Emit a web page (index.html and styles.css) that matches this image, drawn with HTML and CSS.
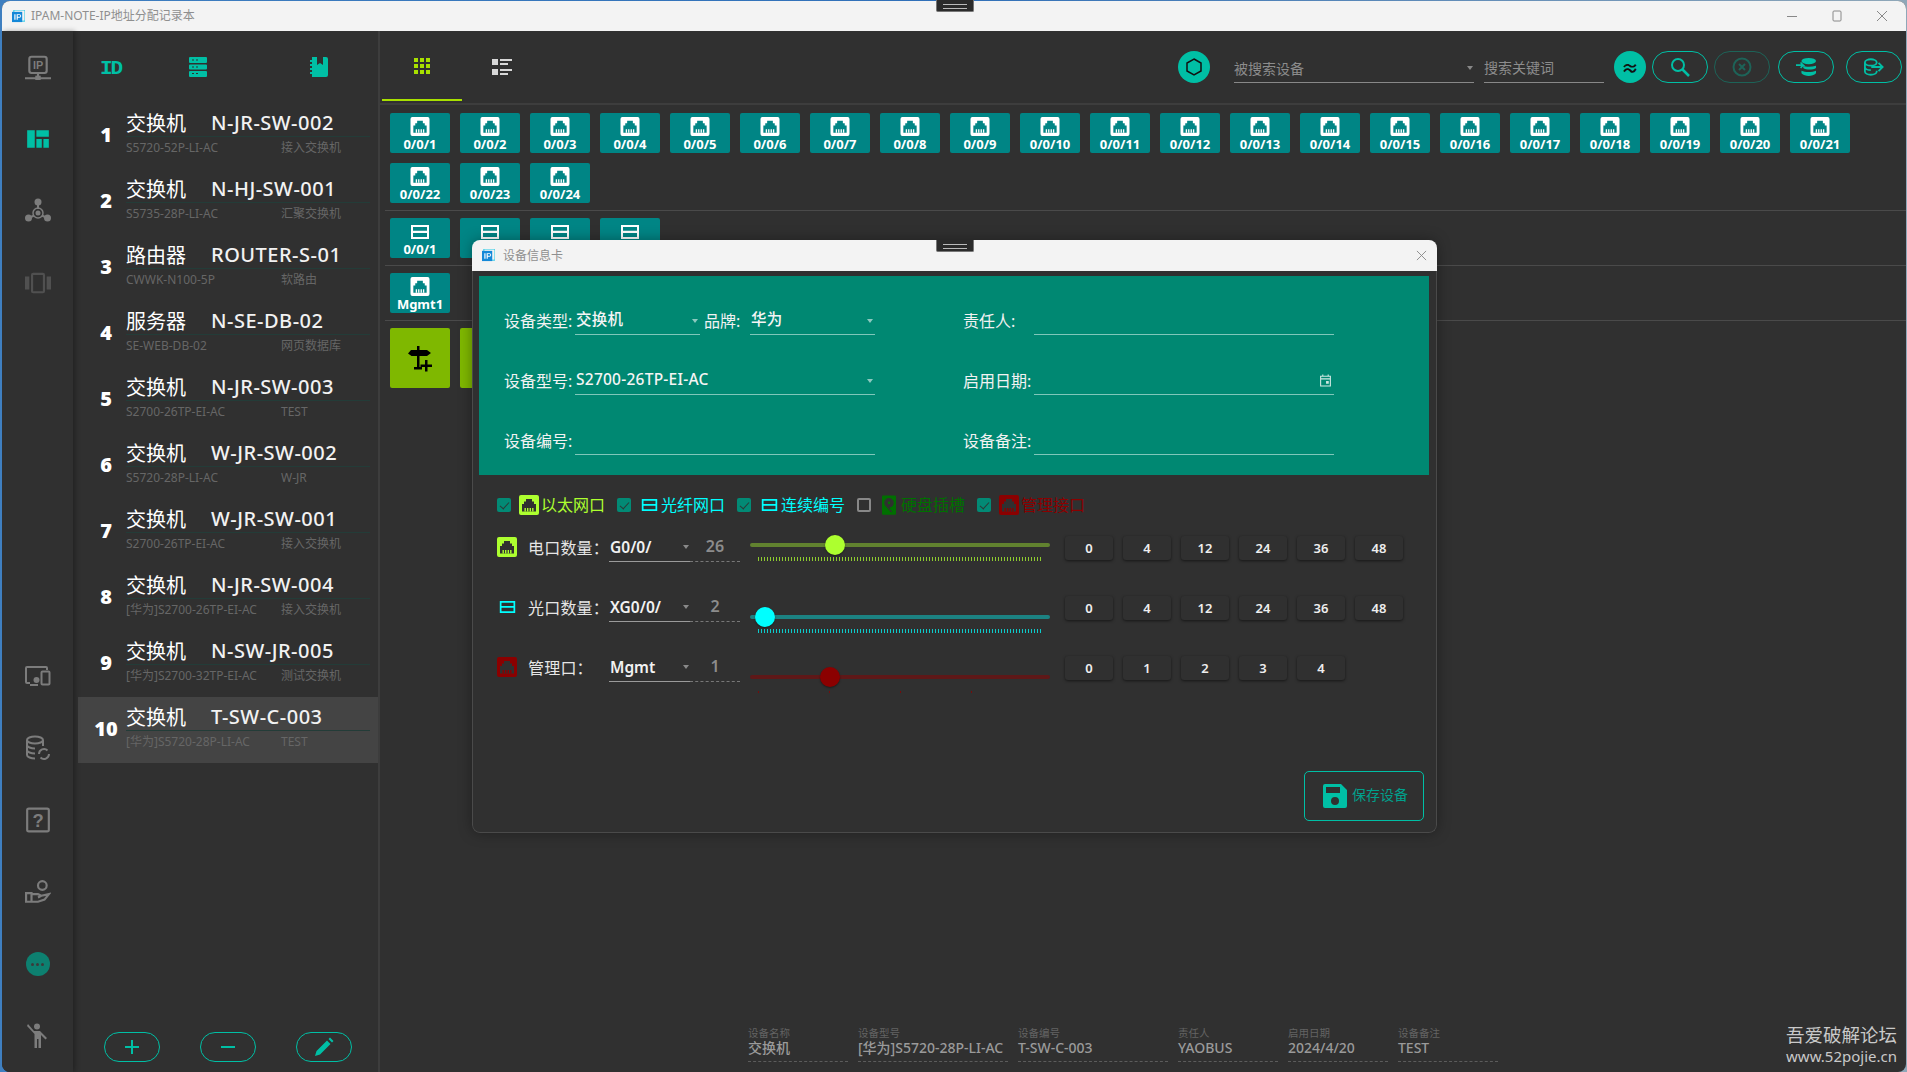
FILE: index.html
```html
<!DOCTYPE html>
<html lang="zh">
<head>
<meta charset="utf-8">
<title>IPAM-NOTE</title>
<link rel="stylesheet" href="styles.css">
</head>
<body>
<svg class="defs" width="0" height="0" aria-hidden="true">
  <symbol id="port" viewBox="0 0 20 20"><path fill-rule="evenodd" d="M2 0h16a2 2 0 0 1 2 2v16a2 2 0 0 1-2 2H2a2 2 0 0 1-2-2V2a2 2 0 0 1 2-2zM7 4v2.500H5V9H3v7.500h14V9h-2V6.500h-2V4z" fill="currentColor"/><path d="M5.500 13h1.400v3.500H5.500zM8 13h1.400v3.500H8zM10.600 13H12v3.500h-1.400zM13.100 13h1.400v3.500h-1.400z" fill="currentColor"/></symbol>
  <symbol id="fiber" viewBox="0 0 18 14"><path fill-rule="evenodd" d="M0 0h18v14H0zM2 2v3.800h14V2zM2 8v4h14V8z" fill="currentColor"/></symbol>
  <symbol id="sign" viewBox="0 0 28 28"><path d="M11 2h2.500v4H21l4 3-4 3h-7.500v11H16v2.500H8V23h3V12H5.500L2 9.500 5 6h6z" fill="#000"/><path d="M19 16h2.500v4.500H26V23h-4.500v4.500H19V23h-4.500v-2.500H19z" fill="#000"/></symbol>
</svg>

<div class="window">
  <header class="titlebar">
    <svg class="app-logo" viewBox="0 0 14 14"><rect x="2" y="0" width="12" height="12" fill="none" stroke="#19c6e6" stroke-width="1"/><rect x="0" y="2" width="11" height="11" fill="#1488d8"/><path d="M2.500 4.500h1.300v6H2.500zM5 4.500h3a1.800 1.800 0 0 1 0 3.800H6.200v2.200H5zm1.200 1v1.800H8a.9.9 0 0 0 0-1.800z" fill="#fff"/></svg>
    <span class="title-text">IPAM-NOTE-IP地址分配记录本</span>
    <div class="win-controls">
      <svg viewBox="0 0 12 12"><path d="M1 6.500h10" stroke="#888" fill="none"/></svg>
      <svg viewBox="0 0 12 12"><rect x="2" y="1" width="8" height="10" rx="1" stroke="#888" fill="none"/></svg>
      <svg viewBox="0 0 12 12"><path d="M1 1l10 10M11 1L1 11" stroke="#888" fill="none"/></svg>
    </div>
  </header>

  <div class="app">
    <nav class="rail">
      <div class="rail-slot"><svg class="rail-icon" viewBox="0 -1.500 24 24"><rect x="4" y="1" width="16" height="15" rx="2" fill="none" stroke="currentColor" stroke-width="2"/><text x="12" y="12.500" class="svg-ip">IP</text><path d="M11 16h2v3h-2zM0 20h24v1.800H0z" fill="currentColor"/><rect x="9.500" y="18.500" width="5" height="4" fill="currentColor"/></svg></div>
      <div class="rail-slot rail-active"><svg class="rail-icon" viewBox="0 0 24 24"><path d="M2 4h7v16H2zM10.500 4H22v6H10.500zM10.500 12H15.500v8H10.500zM17 12h5v8h-5z" fill="currentColor"/></svg></div>
      <div class="rail-slot"><svg class="rail-icon" viewBox="0 0 26 26"><circle cx="13" cy="4" r="3.500" fill="currentColor"/><circle cx="3.500" cy="20" r="3.500" fill="currentColor"/><circle cx="22.500" cy="20" r="3.500" fill="currentColor"/><circle cx="13" cy="15" r="2.500" fill="currentColor"/><path d="M13 7v4M6 19l3-1.500M20 19l-3-1.500" stroke="currentColor" stroke-width="2"/><circle cx="13" cy="15" r="5" fill="none" stroke="currentColor" stroke-width="1.500"/></svg></div>
      <div class="rail-slot rail-dim"><svg class="rail-icon" viewBox="0 0 24 24"><path d="M0 6h4v12H0zM20 6h4v12h-4z" fill="currentColor"/><rect x="6.500" y="3.500" width="11" height="17" rx="1" fill="none" stroke="currentColor" stroke-width="2"/></svg></div>
      <div class="rail-spacer"></div>
      <div class="rail-slot"><svg class="rail-icon" viewBox="0 0 26 22"><path d="M5 18H2a1 1 0 0 1-1-1V3a1 1 0 0 1 1-1h19a1 1 0 0 1 1 1v2" fill="none" stroke="currentColor" stroke-width="2"/><rect x="16.500" y="6.500" width="8" height="13" rx="1" fill="none" stroke="currentColor" stroke-width="2"/><circle cx="11.500" cy="15" r="3" fill="currentColor"/><path d="M5 20h8" stroke="currentColor" stroke-width="2"/></svg></div>
      <div class="rail-slot"><svg class="rail-icon" viewBox="0 0 26 26"><ellipse cx="10" cy="5" rx="8" ry="3.500" fill="none" stroke="currentColor" stroke-width="2"/><path d="M2 5v15c0 2 4 3.500 8 3.500M18 5v6M2 10c0 2 4 3.500 8 3.500M2 15c0 2 4 3.500 8 3.500" fill="none" stroke="currentColor" stroke-width="2"/><path d="M14 19a5 5 0 0 1 8.500-3.500M24 19a5 5 0 0 1-8.500 3.500" fill="none" stroke="currentColor" stroke-width="2"/></svg></div>
      <div class="rail-slot"><svg class="rail-icon" viewBox="0 0 24 24"><rect x="2" y="1.500" width="20" height="21" rx="1.500" fill="none" stroke="currentColor" stroke-width="2"/><text x="12" y="18" class="svg-q">?</text></svg></div>
      <div class="rail-slot"><svg class="rail-icon" viewBox="0 0 24 24"><circle cx="16" cy="6" r="4" fill="none" stroke="currentColor" stroke-width="2"/><path d="M1 13h5v8H1zM6 14h6l3 1.500-3 1.500M15 15.500l7-1.500-4 5-6 2H6" fill="none" stroke="currentColor" stroke-width="2"/></svg></div>
      <div class="rail-slot rail-more"><span class="more-dot"><i></i><i></i><i></i></span></div>
      <div class="rail-slot"><svg class="rail-icon" viewBox="0 0 24 26"><circle cx="11" cy="3.500" r="3" fill="currentColor"/><path d="M2 1l6 7h6l7 7-1.500 1.500L15 12v13h-2.500v-9h-1.500v9H8.500V11L1 3z" fill="currentColor"/></svg></div>
    </nav>

    <aside class="panel">
      <div class="panel-head">
        <span class="head-id">ID</span>
        <svg class="head-icon" viewBox="0 0 18 20"><path d="M1 0h16a1 1 0 0 1 1 1v4a1 1 0 0 1-1 1H1a1 1 0 0 1-1-1V1a1 1 0 0 1 1-1zM1 7.500h16a1 1 0 0 1 1 1v3a1 1 0 0 1-1 1H1a1 1 0 0 1-1-1v-3a1 1 0 0 1 1-1zM1 14h16a1 1 0 0 1 1 1v4a1 1 0 0 1-1 1H1a1 1 0 0 1-1-1v-4a1 1 0 0 1 1-1z" fill="currentColor"/><path d="M3 2.500h2v1H3zM7 2.500h2v1H7zM3 9.500h2v1H3zM7 9.500h2v1H7zM3 16h2v1H3zM7 16h2v1H7z" fill="#303030"/></svg>
        <svg class="head-icon head-book" viewBox="0 0 18 20"><path d="M2 0h5v8l3-2 3 2V0h3a2 2 0 0 1 2 2v16a2 2 0 0 1-2 2H2z" fill="currentColor"/><path d="M0 3h2v2H0zM0 7h2v2H0zM0 11h2v2H0zM0 15h2v2H0z" fill="currentColor"/></svg>
      </div>
      <ul class="dev-list">
        <li class="dev"><b class="dev-no">1</b><div class="dev-body"><div class="dev-main"><span class="dev-type">交换机</span><span class="dev-host">N-JR-SW-002</span></div><div class="dev-sub"><span class="dev-model">S5720-52P-LI-AC</span><span>接入交换机</span></div></div></li>
        <li class="dev"><b class="dev-no">2</b><div class="dev-body"><div class="dev-main"><span class="dev-type">交换机</span><span class="dev-host">N-HJ-SW-001</span></div><div class="dev-sub"><span class="dev-model">S5735-28P-LI-AC</span><span>汇聚交换机</span></div></div></li>
        <li class="dev"><b class="dev-no">3</b><div class="dev-body"><div class="dev-main"><span class="dev-type">路由器</span><span class="dev-host">ROUTER-S-01</span></div><div class="dev-sub"><span class="dev-model">CWWK-N100-5P</span><span>软路由</span></div></div></li>
        <li class="dev"><b class="dev-no">4</b><div class="dev-body"><div class="dev-main"><span class="dev-type">服务器</span><span class="dev-host">N-SE-DB-02</span></div><div class="dev-sub"><span class="dev-model">SE-WEB-DB-02</span><span>网页数据库</span></div></div></li>
        <li class="dev"><b class="dev-no">5</b><div class="dev-body"><div class="dev-main"><span class="dev-type">交换机</span><span class="dev-host">N-JR-SW-003</span></div><div class="dev-sub"><span class="dev-model">S2700-26TP-EI-AC</span><span>TEST</span></div></div></li>
        <li class="dev"><b class="dev-no">6</b><div class="dev-body"><div class="dev-main"><span class="dev-type">交换机</span><span class="dev-host">W-JR-SW-002</span></div><div class="dev-sub"><span class="dev-model">S5720-28P-LI-AC</span><span>W-JR</span></div></div></li>
        <li class="dev"><b class="dev-no">7</b><div class="dev-body"><div class="dev-main"><span class="dev-type">交换机</span><span class="dev-host">W-JR-SW-001</span></div><div class="dev-sub"><span class="dev-model">S2700-26TP-EI-AC</span><span>接入交换机</span></div></div></li>
        <li class="dev"><b class="dev-no">8</b><div class="dev-body"><div class="dev-main"><span class="dev-type">交换机</span><span class="dev-host">N-JR-SW-004</span></div><div class="dev-sub"><span class="dev-model">[华为]S2700-26TP-EI-AC</span><span>接入交换机</span></div></div></li>
        <li class="dev"><b class="dev-no">9</b><div class="dev-body"><div class="dev-main"><span class="dev-type">交换机</span><span class="dev-host">N-SW-JR-005</span></div><div class="dev-sub"><span class="dev-model">[华为]S2700-32TP-EI-AC</span><span>测试交换机</span></div></div></li>
        <li class="dev dev-selected"><b class="dev-no">10</b><div class="dev-body"><div class="dev-main"><span class="dev-type">交换机</span><span class="dev-host">T-SW-C-003</span></div><div class="dev-sub"><span class="dev-model">[华为]S5720-28P-LI-AC</span><span>TEST</span></div></div></li>
      </ul>
      <div class="panel-actions">
        <button class="pill"><svg viewBox="0 0 16 16"><path d="M7 1h2v6h6v2H9v6H7V9H1V7h6z" fill="currentColor"/></svg></button>
        <button class="pill"><svg viewBox="0 0 16 16"><path d="M1 7h14v2H1z" fill="currentColor"/></svg></button>
        <button class="pill"><svg viewBox="0 0 20 20"><path d="M1 19l1.500-5L13 3.500l3.500 3.500L6 17.500zM14.500 2l1.500-1.500 3.500 3.500L18 5.500z" fill="currentColor"/></svg></button>
      </div>
    </aside>

    <main class="main">
      <div class="main-head">
        <div class="tab tab-active"><svg viewBox="0 0 16 16"><path d="M0 0h4v4H0zM6 0h4v4H6zM12 0h4v4h-4zM0 6h4v4H0zM6 6h4v4H6zM12 6h4v4h-4zM0 12h4v4H0zM6 12h4v4H6zM12 12h4v4h-4z" fill="currentColor"/></svg></div>
        <div class="tab"><svg class="tab-list" viewBox="0 0 20 16"><path d="M0 0h6v6H0zM0 10h6v6H0zM8 0h12v2H8zM8 4h8v2H8zM8 10h12v2H8zM8 14h8v2H8z" fill="currentColor"/></svg></div>
        <div class="tools">
          <button class="round-btn"><svg viewBox="0 0 16 18"><path d="M8 1l7 4v8l-7 4-7-4V5z" fill="none" stroke="#111" stroke-width="1.500"/></svg></button>
          <div class="tool-select"><span>被搜索设备</span><i class="caret caret-grey"></i></div>
          <div class="tool-input">搜索关键词</div>
          <button class="round-btn round-approx">≈</button>
          <button class="pill pill-tool"><svg viewBox="0 0 20 20"><circle cx="8" cy="8" r="6" fill="none" stroke="currentColor" stroke-width="2"/><path d="M12.500 12.500L19 19" stroke="currentColor" stroke-width="2.500"/></svg></button>
          <button class="pill pill-tool pill-off"><svg viewBox="0 0 20 20"><circle cx="10" cy="10" r="8.500" fill="none" stroke="currentColor" stroke-width="2"/><path d="M7 7l6 6M13 7l-6 6" stroke="currentColor" stroke-width="2"/></svg></button>
          <button class="pill pill-tool"><svg viewBox="0 0 22 20"><ellipse cx="14" cy="3.500" rx="8" ry="3.500" fill="currentColor"/><path d="M8 8.500c3 1.500 9 1.500 14 0v2.500c-3 2.500-11 2.500-14 0zM6 14c4 2 12 2 16 0v3c-4 4-12 4-16 0z" fill="currentColor"/><path d="M0 8h8l-3-3M8 8l-3 3" stroke="currentColor" stroke-width="1.800" fill="none"/></svg></button>
          <button class="pill pill-tool"><svg viewBox="0 0 22 20"><path d="M14 5c0 2-3 3.500-6.500 3.500S1 7 1 5s3-3.500 6.500-3.500S14 3 14 5zM1 5v10c0 2 3 3.500 6.500 3.500S14 17 14 15v-1M1 10c0 2 3 3.500 6.500 3.500" fill="none" stroke="currentColor" stroke-width="2"/><path d="M8 10h12M16 5.500l4.500 4.500-4.500 4.500" fill="none" stroke="currentColor" stroke-width="2"/></svg></button>
        </div>
      </div>

      <section class="tile-group tile-first">
        <div class="tile"><svg><use href="#port"/></svg><span>0/0/1</span></div>
        <div class="tile"><svg><use href="#port"/></svg><span>0/0/2</span></div>
        <div class="tile"><svg><use href="#port"/></svg><span>0/0/3</span></div>
        <div class="tile"><svg><use href="#port"/></svg><span>0/0/4</span></div>
        <div class="tile"><svg><use href="#port"/></svg><span>0/0/5</span></div>
        <div class="tile"><svg><use href="#port"/></svg><span>0/0/6</span></div>
        <div class="tile"><svg><use href="#port"/></svg><span>0/0/7</span></div>
        <div class="tile"><svg><use href="#port"/></svg><span>0/0/8</span></div>
        <div class="tile"><svg><use href="#port"/></svg><span>0/0/9</span></div>
        <div class="tile"><svg><use href="#port"/></svg><span>0/0/10</span></div>
        <div class="tile"><svg><use href="#port"/></svg><span>0/0/11</span></div>
        <div class="tile"><svg><use href="#port"/></svg><span>0/0/12</span></div>
        <div class="tile"><svg><use href="#port"/></svg><span>0/0/13</span></div>
        <div class="tile"><svg><use href="#port"/></svg><span>0/0/14</span></div>
        <div class="tile"><svg><use href="#port"/></svg><span>0/0/15</span></div>
        <div class="tile"><svg><use href="#port"/></svg><span>0/0/16</span></div>
        <div class="tile"><svg><use href="#port"/></svg><span>0/0/17</span></div>
        <div class="tile"><svg><use href="#port"/></svg><span>0/0/18</span></div>
        <div class="tile"><svg><use href="#port"/></svg><span>0/0/19</span></div>
        <div class="tile"><svg><use href="#port"/></svg><span>0/0/20</span></div>
        <div class="tile"><svg><use href="#port"/></svg><span>0/0/21</span></div>
        <div class="tile"><svg><use href="#port"/></svg><span>0/0/22</span></div>
        <div class="tile"><svg><use href="#port"/></svg><span>0/0/23</span></div>
        <div class="tile"><svg><use href="#port"/></svg><span>0/0/24</span></div>
      </section>
      <section class="tile-group">
        <div class="tile tile-fiber"><svg><use href="#fiber"/></svg><span>0/0/1</span></div>
        <div class="tile tile-fiber"><svg><use href="#fiber"/></svg></div>
        <div class="tile tile-fiber"><svg><use href="#fiber"/></svg></div>
        <div class="tile tile-fiber"><svg><use href="#fiber"/></svg></div>
      </section>
      <section class="tile-group">
        <div class="tile"><svg><use href="#port"/></svg><span>Mgmt1</span></div>
      </section>
      <section class="tile-group tile-last">
        <div class="tile-add"><svg><use href="#sign"/></svg></div>
        <div class="tile-add"><svg><use href="#sign"/></svg></div>
      </section>

      <footer class="summary">
        <div class="sum sum-s"><small>设备名称</small><span>交换机</span></div>
        <div class="sum sum-l"><small>设备型号</small><span>[华为]S5720-28P-LI-AC</span></div>
        <div class="sum sum-l"><small>设备编号</small><span>T-SW-C-003</span></div>
        <div class="sum sum-s"><small>责任人</small><span>YAOBUS</span></div>
        <div class="sum sum-s"><small>启用日期</small><span>2024/4/20</span></div>
        <div class="sum sum-s"><small>设备备注</small><span>TEST</span></div>
      </footer>
    </main>
  </div>
</div>

<div class="snap snap-top"></div>

<div class="dialog">
  <div class="dlg-title">
    <svg class="app-logo" viewBox="0 0 14 14"><rect x="2" y="0" width="12" height="12" fill="none" stroke="#19c6e6" stroke-width="1"/><rect x="0" y="2" width="11" height="11" fill="#1488d8"/><path d="M2.500 4.500h1.300v6H2.500zM5 4.500h3a1.800 1.800 0 0 1 0 3.800H6.200v2.200H5zm1.200 1v1.800H8a.9.9 0 0 0 0-1.800z" fill="#fff"/></svg>
    <span class="dlg-text">设备信息卡</span>
    <svg class="dlg-close" viewBox="0 0 12 12"><path d="M1 1l10 10M11 1L1 11" stroke="#888" fill="none"/></svg>
  </div>
  <div class="dlg-body">
    <div class="form">
      <div class="form-row">
        <label class="f-label">设备类型:</label>
        <div class="f-field f-short"><span>交换机</span><i class="caret"></i></div>
        <label class="f-label f-brand">品牌:</label>
        <div class="f-field f-short"><span>华为</span><i class="caret"></i></div>
        <label class="f-label f-right f-gap-a">责任人:</label>
        <div class="f-field f-long"></div>
      </div>
      <div class="form-row">
        <label class="f-label">设备型号:</label>
        <div class="f-field f-long"><span>S2700-26TP-EI-AC</span><i class="caret"></i></div>
        <label class="f-label f-right">启用日期:</label>
        <div class="f-field f-long"><svg class="cal" viewBox="0 0 12 12"><path d="M1.500 2h9v9h-9zM1.500 4.500h9M3.500.5v2M8.500.5v2" fill="none" stroke="#cfe9e3"/><path d="M6.500 6.500h2.500v2.500H6.500z" fill="#cfe9e3"/></svg></div>
      </div>
      <div class="form-row">
        <label class="f-label">设备编号:</label>
        <div class="f-field f-long"></div>
        <label class="f-label f-right">设备备注:</label>
        <div class="f-field f-long"></div>
      </div>
    </div>

    <div class="checks">
      <div class="check c-lime"><i class="box on"></i><span class="check-icon"><svg class="ci-port"><use href="#port"/></svg></span><span>以太网口</span></div>
      <div class="check c-cyan"><i class="box on"></i><span class="check-icon"><svg class="ci-fiber"><use href="#fiber"/></svg></span><span>光纤网口</span></div>
      <div class="check c-cyan"><i class="box on"></i><span class="check-icon"><svg class="ci-fiber"><use href="#fiber"/></svg></span><span>连续编号</span></div>
      <div class="check c-green"><i class="box"></i><span class="check-icon"><svg class="ci-disk" viewBox="0 0 16 22"><path fill-rule="evenodd" d="M1 0h14a1 1 0 0 1 1 1v20a1 1 0 0 1-1 1H1a1 1 0 0 1-1-1V1a1 1 0 0 1 1-1zm7 3a5.500 5.500 0 1 0 0 11 5.500 5.500 0 0 0 0-11z" fill="currentColor"/><circle cx="8" cy="8.500" r="1.500" fill="currentColor"/><path d="M6 13l5 6" stroke="#303030" stroke-width="1.500"/></svg></span><span>硬盘插槽</span></div>
      <div class="check c-red"><i class="box on"></i><span class="check-icon"><svg class="ci-port"><use href="#port"/></svg></span><span>管理接口</span></div>
    </div>

    <div class="port-row c-lime">
      <span class="row-icon"><svg class="ci-port"><use href="#port"/></svg></span>
      <span class="row-label">电口数量：</span>
      <div class="row-select"><span>G0/0/</span><i class="caret caret-grey"></i></div>
      <div class="row-value">26</div>
      <div class="slider slider-high">
        <div class="track"></div>
        <div class="ticks"></div>
        <i class="thumb" style="left:75px"></i>
      </div>
      <div class="presets"><button>0</button><button>4</button><button>12</button><button>24</button><button>36</button><button>48</button></div>
    </div>
    <div class="port-row c-cyan">
      <span class="row-icon"><svg class="ci-fiber"><use href="#fiber"/></svg></span>
      <span class="row-label">光口数量：</span>
      <div class="row-select"><span>XG0/0/</span><i class="caret caret-grey"></i></div>
      <div class="row-value">2</div>
      <div class="slider">
        <div class="track"></div>
        <div class="ticks"></div>
        <i class="thumb" style="left:5px"></i>
      </div>
      <div class="presets"><button>0</button><button>4</button><button>12</button><button>24</button><button>36</button><button>48</button></div>
    </div>
    <div class="port-row c-red">
      <span class="row-icon"><svg class="ci-port"><use href="#port"/></svg></span>
      <span class="row-label">管理口：</span>
      <div class="row-select"><span>Mgmt</span><i class="caret caret-grey"></i></div>
      <div class="row-value">1</div>
      <div class="slider">
        <div class="track track-red"></div>
        <div class="ticks ticks-sparse"></div>
        <i class="thumb" style="left:70px"></i>
      </div>
      <div class="presets"><button>0</button><button>1</button><button>2</button><button>3</button><button>4</button></div>
    </div>

    <button class="save"><svg viewBox="0 0 24 24"><path fill-rule="evenodd" d="M2 0h16l6 6v16a2 2 0 0 1-2 2H2a2 2 0 0 1-2-2V2a2 2 0 0 1 2-2zm1 3v6h14V3zm9 10a4 4 0 1 0 0 8 4 4 0 0 0 0-8z" fill="currentColor"/></svg><span>保存设备</span></button>
  </div>
</div>

<div class="snap snap-dlg"></div>

<div class="watermark">
  <div class="wm-cn">吾爱破解论坛</div>
  <div class="wm-en">www.52pojie.cn</div>
</div>
</body>
</html>
```

FILE: styles.css
```css
* { box-sizing: border-box; }
html, body { margin: 0; padding: 0; height: 1072px; overflow: hidden; }
body {
  background: linear-gradient(90deg, #3f7fc0, #2f6fb8 50%, #8fa7b8);
  font-family: "Noto Sans", "Noto Sans CJK SC", sans-serif;
  color: #eee;
  padding: 1px 1px 0 2px;
}
.defs { position: absolute; }
button { font-family: inherit; cursor: pointer; }
ul { list-style: none; margin: 0; padding: 0; }

.window { height: 1071px; display: flex; flex-direction: column; border-radius: 8px; overflow: hidden; background: #303030; }

/* title bar */
.titlebar { flex: 0 0 30px; background: #f3f3f3; display: flex; align-items: center; padding-left: 10px; }
.app-logo { width: 13px; height: 13px; flex: none; }
.title-text { margin-left: 6px; font-size: 12px; color: #8f8f8f; white-space: nowrap; padding-bottom: 2px; }
.win-controls { margin-left: auto; display: flex; gap: 33px; margin-right: 18px; }
.win-controls svg { width: 12px; height: 12px; }

.app { flex: 1; display: flex; min-height: 0; }

/* rail */
.rail { flex: 0 0 71px; display: flex; flex-direction: column; background: #303030; box-shadow: 2px 0 5px rgba(0,0,0,.3); position: relative; z-index: 1; color: #7c7c7c; }
.rail-slot { flex: 0 0 72px; display: flex; align-items: center; justify-content: center; }
.rail-spacer { flex: 1; }
.rail-icon { width: 26px; height: 26px; }
.rail-active { color: #00bfa5; }
.rail-dim { color: #505050; }
.svg-ip { font: 700 10px "Liberation Sans", sans-serif; fill: currentColor; text-anchor: middle; }
.svg-q { font: 700 17px "Liberation Sans", sans-serif; fill: currentColor; text-anchor: middle; }
.more-dot { width: 24px; height: 24px; border-radius: 50%; background: #0d8070; display: flex; align-items: center; justify-content: center; gap: 2px; }
.more-dot i { width: 3px; height: 3px; border-radius: 50%; background: #3b3b3b; }

/* panel */
.panel { flex: 0 0 307px; border-right: 2px solid #3d3d3d; display: flex; flex-direction: column; }
.panel-head { flex: 0 0 72px; display: flex; align-items: center; color: #00bfa5; padding-left: 30px; }
.head-id { width: 86px; margin: 3px 3px 0 -3px; font: 700 21px/1 "Liberation Mono", monospace; letter-spacing: -2px; }
.head-icon { width: 18px; height: 20px; }
.head-book { margin-left: 103px; }
.dev-list { flex: 1; margin-left: 5px; }
.dev { height: 66px; display: flex; }
.dev-selected { background: #444; }
.dev-no { flex: 0 0 48px; padding-left: 8px; font: 800 20px/64px "Open Sans", sans-serif; text-align: center; color: #fff; }
.dev-body { flex: 0 0 244px; }
.dev-main { height: 34px; padding-top: 7px; line-height: 27px; border-bottom: 1px solid #233c38; display: flex; white-space: nowrap; }
.dev-type { width: 85px; font-size: 20px; color: #fff; }
.dev-host { font-size: 20px; font-weight: 500; letter-spacing: .5px; color: #f2f2f2; margin-top: -1px; }
.dev-sub { display: flex; height: 22px; line-height: 22px; font-size: 12px; color: #666; white-space: nowrap; }
.dev-model { width: 155px; }
.panel-actions { flex: none; display: flex; gap: 40px; padding: 0 0 10px 31px; }

/* pills */
.pill { width: 56px; height: 30px; border: 1px solid #00bfa5; border-radius: 15px; background: transparent; color: #00bfa5; padding: 0; display: flex; align-items: center; justify-content: center; }
.pill svg { width: 16px; height: 16px; }
.panel-actions .pill:last-child svg { width: 20px; height: 20px; }

/* main */
.main { flex: 1; min-width: 0; display: flex; flex-direction: column; }
.main-head { flex: 0 0 74px; border-bottom: 2px solid #3d3d3d; display: flex; padding-left: 2px; }
.tab { flex: 0 0 80px; height: 70px; display: flex; align-items: center; justify-content: center; color: #d8d8d8; padding-top: 2px; }
.tab svg { width: 16px; height: 16px; }
.tab .tab-list { width: 20px; }
.tab-active { color: #a8e000; border-bottom: 2px solid #a8e000; }
.tools { margin-left: auto; height: 72px; display: flex; align-items: flex-start; padding: 20px 4px 0 0; }
.round-btn { width: 32px; height: 32px; border-radius: 50%; border: 0; background: #00bfa5; color: #111; padding: 0; display: flex; align-items: center; justify-content: center; font-size: 18px; font-weight: 700; }
.round-btn svg { width: 16px; height: 18px; }
.tool-select { width: 240px; height: 32px; margin-left: 24px; border-bottom: 1px solid #888; display: flex; align-items: center; justify-content: space-between; color: #8c8c8c; font-size: 14px; padding: 2px 1px 0 0; }
.tool-input { width: 120px; height: 32px; margin-left: 10px; border-bottom: 1px solid #888; line-height: 33px; color: #8c8c8c; font-size: 14px; }
.round-approx { margin-left: 10px; }
.pill-tool { height: 32px; border-radius: 16px; margin-left: 6px; }
.pill-tool svg { width: 20px; height: 20px; }
.pill-off { color: #1d6358; border-color: #1d6358; }
.pill-off + .pill-tool { margin-left: 8px; }
.pill-off + .pill-tool + .pill-tool { margin-left: 12px; }
.caret { display: inline-block; width: 0; height: 0; border: 3.500px solid transparent; border-top: 4px solid rgba(255,255,255,.55); border-bottom: 0; }
.caret-grey { border-top-color: #888; }

/* tiles */
.tile-group { margin-left: 5px; padding: 7px 0 7px 5px; border-bottom: 1px solid #4a4a4a; display: flex; flex-wrap: wrap; gap: 10px; }
.tile-first { padding-top: 8px; }
.tile-last { border-bottom: 0; }
.tile { width: 60px; height: 40px; background: #008585; border-radius: 2px; display: flex; flex-direction: column; align-items: center; color: #fff; font-size: 13px; font-weight: 700; line-height: 14px; padding-top: 4px; white-space: nowrap; }
.tile svg { width: 20px; height: 19px; flex: none; margin-bottom: 1px; }
.tile-fiber svg { width: 18px; height: 14px; margin: 3px 0 3px; }
.tile-add { width: 60px; height: 60px; background: #7fb800; border-radius: 2px; display: flex; align-items: center; justify-content: center; }
.tile-add svg { width: 28px; height: 28px; }

/* summary */
.summary { margin-top: auto; margin-bottom: 10px; padding-left: 368px; display: flex; gap: 10px; }
.sum { border-bottom: 1px dashed #5c5c5c; padding-bottom: 5px; display: flex; flex-direction: column; white-space: nowrap; }
.sum-s { width: 100px; }
.sum-l { width: 150px; }
.sum small { font-size: 10.500px; line-height: 12px; color: #636363; }
.sum span { font-size: 14px; line-height: 17px; color: #9a9a9a; font-weight: 500; }

/* snap handle */
.snap { position: absolute; left: 936px; width: 38px; height: 12px; background: #2b2b2b; border: 1px solid #777; border-top: 0; border-radius: 0 0 2px 2px; z-index: 5; }
.snap::after { content: ""; position: absolute; left: 6px; right: 6px; top: 4px; height: 3px; border-top: 1px solid #bbb; border-bottom: 1px solid #bbb; }
.snap-top { top: 0; }
.snap-dlg { top: 240px; }

/* dialog */
.dialog { position: absolute; left: 472px; top: 240px; width: 965px; height: 593px; display: flex; flex-direction: column; border-radius: 8px; overflow: hidden; box-shadow: 0 0 14px rgba(0,0,0,.35); z-index: 3; }
.dlg-title { flex: 0 0 31px; background: #f3f3f3; display: flex; align-items: center; padding-left: 10px; }
.dlg-text { margin-left: 8px; font-size: 12px; color: #8f8f8f; padding-bottom: 2px; }
.dlg-close { width: 11px; height: 11px; margin-left: auto; margin-right: 10px; }
.dlg-body { flex: 1; background: #303030; border: 1px solid #4a4a4a; border-top: 0; border-radius: 0 0 8px 8px; display: flex; flex-direction: column; padding-top: 5px; min-height: 0; }

.form { margin: 0 7px 0 6px; height: 199px; background: #008872; padding: 9px 0 0 25px; display: flex; flex-direction: column; gap: 10px; flex: none; }
.form-row { height: 50px; display: flex; align-items: flex-end; }
.f-label { height: 26px; line-height: 26px; width: 71px; font-size: 16px; color: #f2f2f2; white-space: nowrap; flex: none; position: relative; top: -1px; }
.f-brand { width: 46px; margin-left: 4px; }
.f-right { margin-left: 88px; }
.f-field { height: 27px; line-height: 25px; border-bottom: 1px solid #7fc7ba; font-size: 15.500px; font-weight: 500; letter-spacing: .25px; color: #f5f5f5; display: flex; align-items: center; justify-content: space-between; padding: 0 1px 3px 1px; flex: none; position: relative; }
.f-short { width: 125px; }
.f-long { width: 300px; }
.f-field .caret { margin: 2px 1px 0 auto; }
.cal { position: absolute; right: 2px; top: 6px; width: 13px; height: 13px; }

/* checks */
.checks { display: flex; margin: 20px 0 0 24px; height: 20px; flex: none; }
.check { width: 120px; display: flex; align-items: center; font-size: 16px; line-height: 20px; white-space: nowrap; }
.box { flex: none; width: 14px; height: 14px; border: 2px solid #888; border-radius: 2px; margin-right: 8px; position: relative; }
.box.on { background: #028a75; border-color: #028a75; }
.box.on::after { content: ""; position: absolute; left: 3px; top: 0; width: 4px; height: 8px; border: solid #2b3a36; border-width: 0 1.500px 1.500px 0; transform: rotate(42deg); }
.check-icon { flex: 0 0 20px; margin-right: 2px; display: flex; align-items: center; justify-content: center; }
.ci-port { width: 20px; height: 20px; display: block; }
.ci-fiber { width: 17px; height: 12px; display: block; }
.ci-disk { width: 14px; height: 20px; display: block; }
.c-lime { color: #adff2f; }
.c-cyan { color: #0ff; }
.c-green { color: #006f00; }
.c-red { color: #8b0000; }

/* port rows */
.port-row { height: 60px; flex: none; display: flex; align-items: center; padding-left: 24px; }
.checks + .port-row { margin-top: 2px; }
.row-icon { flex: 0 0 20px; display: flex; justify-content: center; }
.row-label { flex: 0 0 81px; margin-left: 11px; font-size: 16px; color: #e6e6e6; white-space: nowrap; letter-spacing: .2px; }
.row-select { flex: 0 0 81px; height: 29px; border-bottom: 1px solid #9a9a9a; display: flex; align-items: center; justify-content: space-between; padding: 1px 1px 1px 1px; font-size: 15.500px; font-weight: 600; color: #f2f2f2; }
.row-value { flex: 0 0 50px; height: 29px; border-bottom: 1px dashed #777; text-align: center; line-height: 27px; font-size: 16px; font-weight: 600; color: #8c8c8c; }
.slider { flex: 0 0 300px; margin-left: 10px; height: 60px; padding-top: 38px; position: relative; color: inherit; }
.slider-high { padding-top: 26px; }
.track { height: 4px; border-radius: 2px; background: currentColor; opacity: .4; }
.track-red { opacity: .5; }
.ticks { margin: 10px 8px 0; height: 4px; opacity: .75; background: repeating-linear-gradient(90deg, currentColor 0, currentColor 1px, transparent 1px, transparent 3px); }
.ticks-sparse { height: 2px; margin-top: 12px; background: repeating-linear-gradient(90deg, currentColor 0, currentColor 1px, transparent 1px, transparent 71px); }
.thumb { position: absolute; top: 30px; width: 20px; height: 20px; border-radius: 50%; background: currentColor; box-shadow: 0 1px 2px rgba(0,0,0,.4); }
.slider-high .thumb { top: 18px; }
.presets { margin-left: 15px; display: flex; gap: 10px; margin-top: 2px; }
.presets button { width: 48px; height: 24px; border: 0; border-radius: 3px; background: #303030; box-shadow: 0 1px 3px rgba(0,0,0,.55); color: #eee; font-size: 13px; font-weight: 600; padding: 0; }

.save { margin: auto 12px 11px auto; flex: none; width: 120px; height: 50px; border: 1px solid #00bfa5; border-radius: 5px; background: transparent; color: #00bfa5; display: flex; align-items: center; justify-content: center; gap: 5px; padding: 0 0 0 3px; }
.save svg { width: 24px; height: 24px; }
.save span { font-size: 14px; color: #00a08c; padding-bottom: 4px; }

.watermark { position: absolute; right: 10px; top: 1022px; text-align: right; color: #c9c9c9; z-index: 6; white-space: nowrap; }
.wm-cn { font-size: 18.500px; line-height: 25px; }
.wm-en { font-size: 15px; line-height: 19px; }
```
